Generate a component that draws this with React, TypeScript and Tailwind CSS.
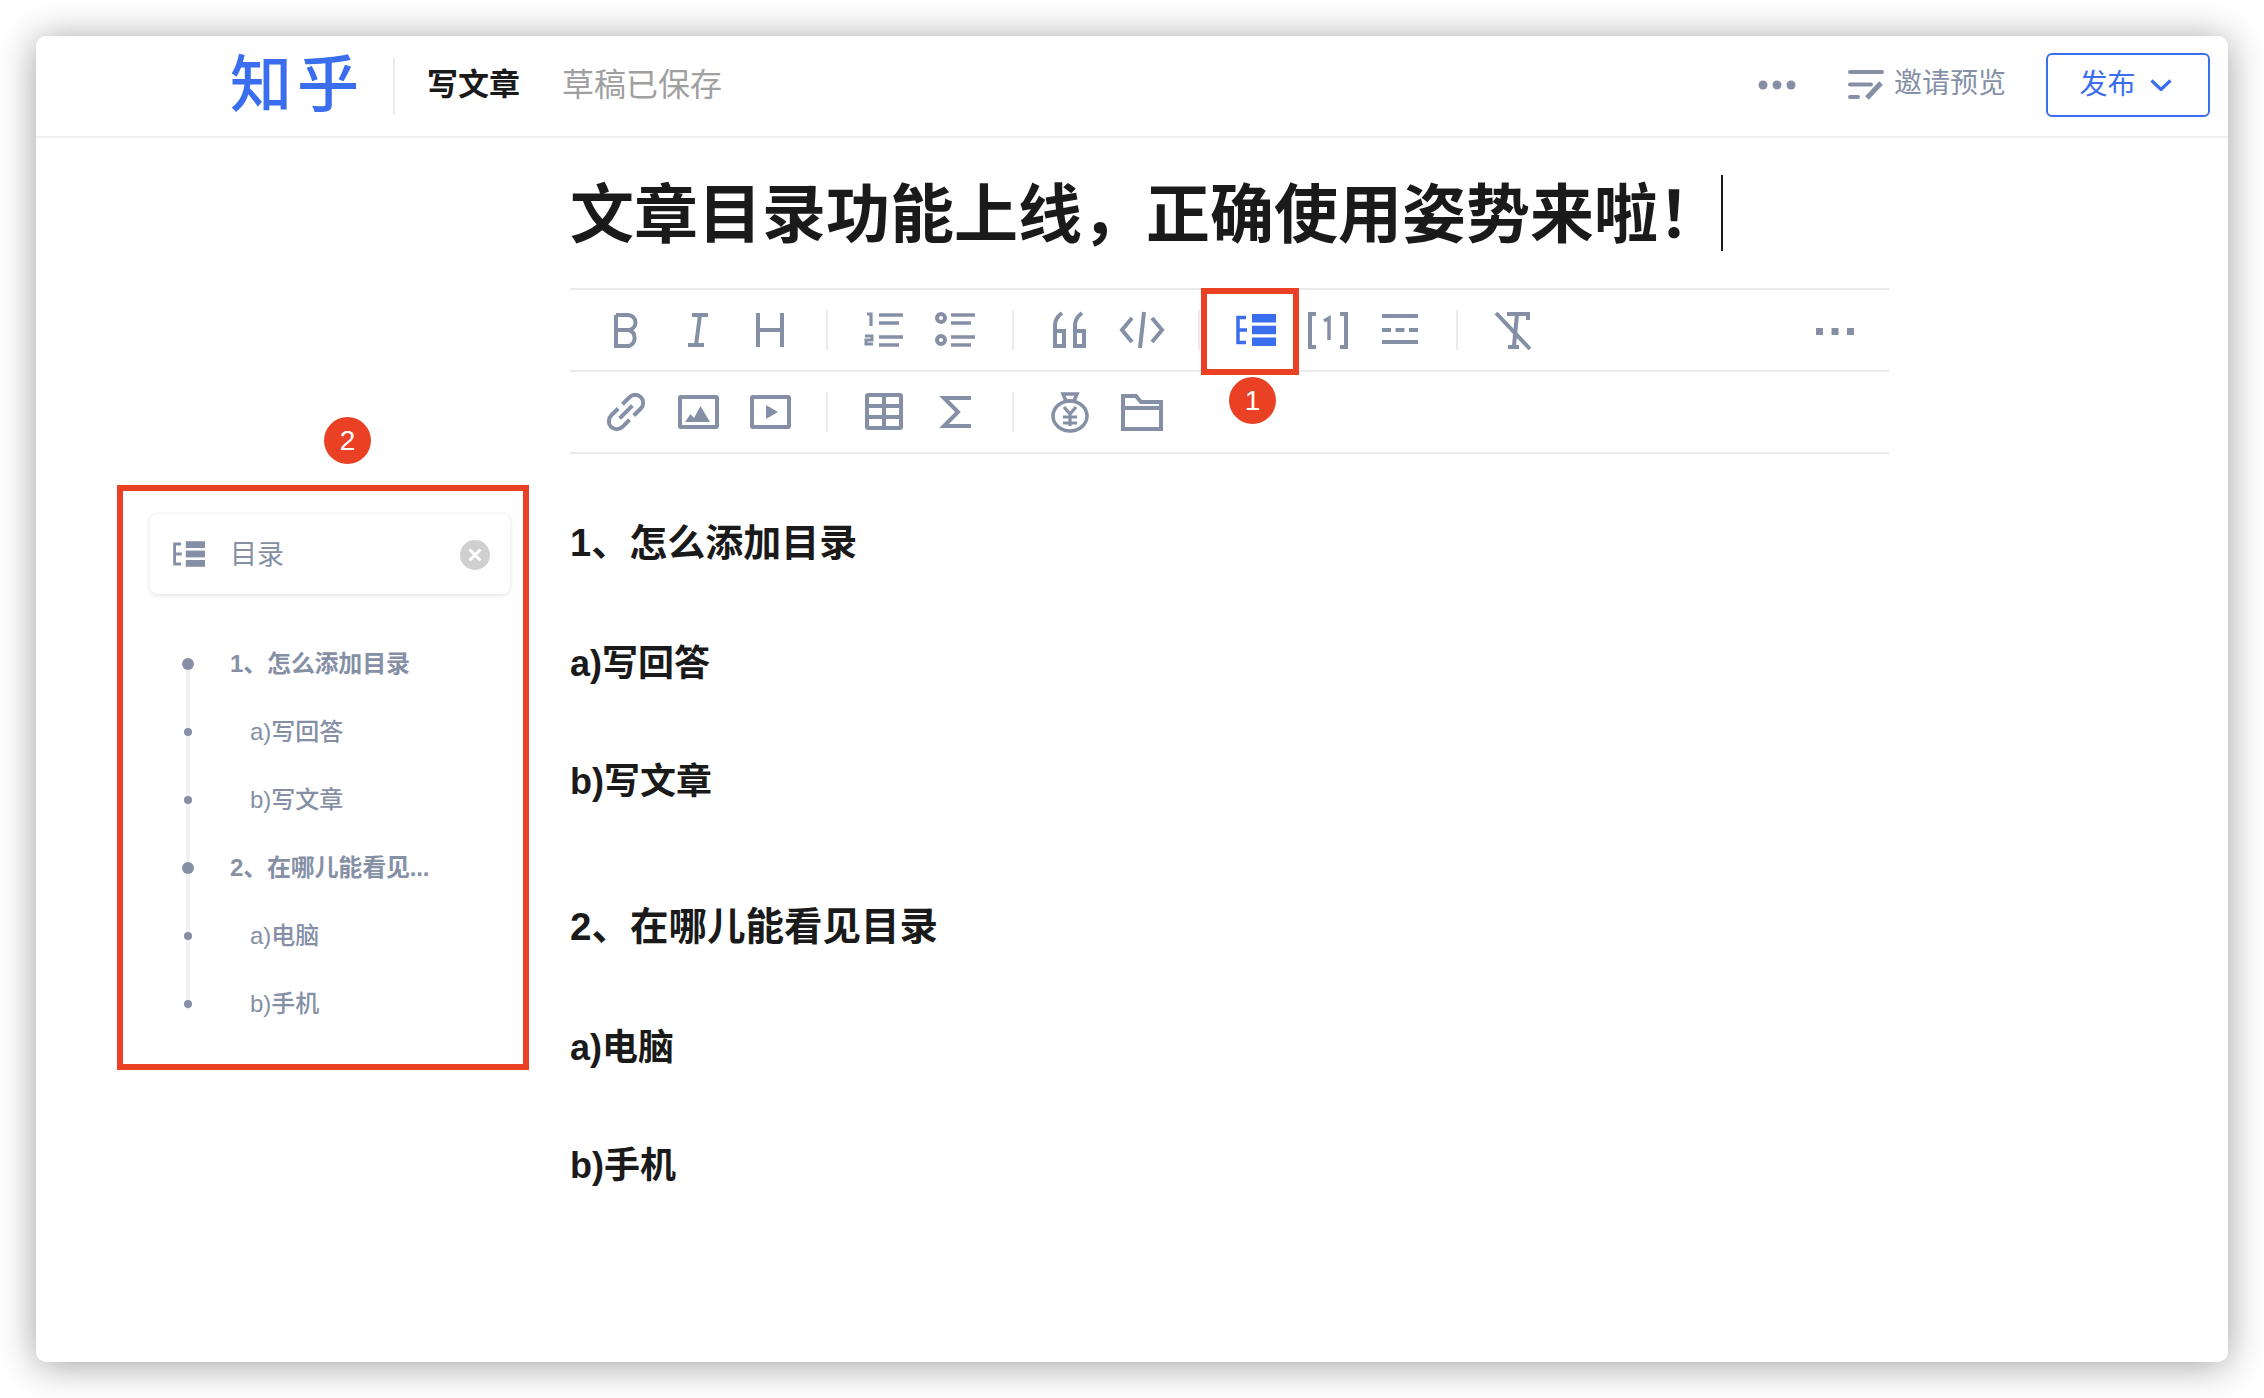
import React from "react";

const Ico = ({ children, vb = "0 0 48 48" }: { children: React.ReactNode; vb?: string }) => (
  <div className="w-[72px] h-[48px] flex items-center justify-center shrink-0 text-[#8590a6]">
    <svg width="48" height="48" viewBox={vb} fill="none" stroke="currentColor" strokeWidth="4">
      {children}
    </svg>
  </div>
);

const Sep = () => <div className="w-[2px] h-[40px] mx-[20px] bg-[#ebebeb] shrink-0" />;

const TocIcon = ({ className }: { className: string }) => (
  <svg className={className} viewBox="0 0 40 32" fill="currentColor">
    <rect x="16" y="0" width="24" height="8.500" />
    <rect x="16" y="11.750" width="24" height="8.500" />
    <rect x="16" y="23.500" width="24" height="8.500" />
    <path d="M10 3.500H2v25h8M2 16h9" fill="none" stroke="currentColor" strokeWidth="3.500" />
  </svg>
);

const toc = [
  { t: "1、怎么添加目录", top: true },
  { t: "a)写回答", top: false },
  { t: "b)写文章", top: false },
  { t: "2、在哪儿能看见...", top: true },
  { t: "a)电脑", top: false },
  { t: "b)手机", top: false },
];

const body = [
  { t: "1、怎么添加目录", c: "mt-[64px] text-[38px]" },
  { t: "a)写回答", c: "mt-[71px] text-[36px]" },
  { t: "b)写文章", c: "mt-[68px] text-[36px]" },
  { t: "2、在哪儿能看见目录", c: "mt-[95px] text-[38.500px]" },
  { t: "a)电脑", c: "mt-[71px] text-[36px]" },
  { t: "b)手机", c: "mt-[68px] text-[36px]" },
];

export default function App() {
  return (
    <div className="w-[2264px] h-[1398px] bg-white p-[36px] font-['Liberation_Sans','Noto_Sans_CJK_SC',sans-serif] overflow-hidden">
      <div className="w-[2192px] h-[1326px] bg-white rounded-[10px] shadow-[0_3px_38px_rgba(0,0,0,0.38)] flex flex-col overflow-hidden">
        {/* header */}
        <header className="h-[100px] shrink-0 flex items-center pl-[194px] pr-[18px] shadow-[0_1px_3px_rgba(26,26,26,0.12)]">
          <span className="w-[128px] text-[62px] leading-[60px] tracking-[5px] font-medium text-[#3a6eee] whitespace-nowrap">知乎</span>
          <div className="w-[2px] h-[57px] bg-[#ebebeb] ml-[35px]" />
          <span className="ml-[32px] text-[31px] font-bold text-[#1a1a1a] mb-[2px]">写文章</span>
          <span className="ml-[42px] text-[32px] text-[#a0a0a0] mb-[2px]">草稿已保存</span>
          <svg className="ml-auto text-[#8590a6] mb-[2px]" width="38" height="12" viewBox="0 0 38 12" fill="currentColor">
            <circle cx="5" cy="6" r="4.500" />
            <circle cx="19" cy="6" r="4.500" />
            <circle cx="33" cy="6" r="4.500" />
          </svg>
          <svg className="ml-[52px] text-[#8590a6] mb-[3px]" width="36" height="30" viewBox="0 0 36 30" fill="none" stroke="currentColor" strokeLinecap="round" strokeWidth="4">
            <path d="M2 2h32M2 14.500h21M2 27h8" />
            <path d="M19 28l14-15" strokeWidth="5" strokeLinecap="butt" />
          </svg>
          <span className="ml-[10px] text-[28px] text-[#8590a6] whitespace-nowrap mb-[4px]">邀请预览</span>
          <button className="ml-[40px] w-[164px] h-[64px] border-2 border-[#3a6eee] rounded-[6px] flex items-center justify-center text-[#3a6eee] text-[28px] mb-[2px] pr-[5px]">
            <span>发布</span>
            <svg className="ml-[14px]" width="22" height="12" viewBox="0 0 22 12" fill="none" stroke="currentColor" strokeWidth="3.200">
              <path d="M1.500 1.500L11 10.500 20.500 1.500" />
            </svg>
          </button>
        </header>

        <div className="flex flex-1">
          {/* sidebar */}
          <aside className="w-[534px] shrink-0 pl-[81px] pt-[349px]">
            <div className="relative w-[412px] h-[585px] border-[6px] border-[#ea4125] pl-[27px] pr-[13px] pt-[23px]">
              <div className="absolute left-[201px] top-[-74px] w-[47px] h-[47px] rounded-full bg-[#ea4125] text-white text-[28px] font-medium flex items-center justify-center">2</div>
              <div className="w-[360px] h-[80px] rounded-[8px] bg-white shadow-[0_1px_5px_rgba(26,26,26,0.14)] flex items-center pl-[23px] pr-[20px] text-[#8590a6]">
                <TocIcon className="w-[32px] h-[26px]" />
                <span className="ml-[25px] text-[27px] mt-[2px]">目录</span>
                <svg className="ml-auto mt-[2px]" width="30" height="30" viewBox="0 0 30 30">
                  <circle cx="15" cy="15" r="15" fill="#d0d0d0" />
                  <path d="M9.500 9.500l11 11M20.500 9.500l-11 11" stroke="#fff" strokeWidth="3" />
                </svg>
              </div>
              <ul className="relative mt-[36px]">
                <div className="absolute left-[36px] top-[34px] w-[4px] h-[346px] bg-[#eef0f4]" />
                {toc.map((it) => (
                  <li key={it.t} className="relative h-[68px] flex items-center text-[24px] text-[#8590a6]">
                    <div className="w-[76px] flex justify-center shrink-0">
                      <div className={it.top ? "w-[12px] h-[12px] rounded-full bg-[#8590a6]" : "w-[8px] h-[8px] rounded-full bg-[#8590a6]"} />
                    </div>
                    <span className={it.top ? "pl-[4px] font-semibold whitespace-nowrap tracking-[-0.2px]" : "pl-[24px] font-medium whitespace-nowrap"}>{it.t}</span>
                  </li>
                ))}
              </ul>
            </div>
          </aside>

          {/* main */}
          <main className="w-[1319px] shrink-0">
            <div className="h-[152px] pt-[39px] flex items-start">
              <h1 className="mt-[2px] text-[64px] leading-[76px] font-bold text-[#1a1a1a] whitespace-nowrap">文章目录功能上线，正确使用姿势来啦！</h1>
              <div className="w-[2px] h-[76px] bg-[#1a1a1a] -ml-[1px]" />
            </div>

            <div className="relative border-t-2 border-[#ebebeb]">
              <div className="absolute left-[631px] top-[-2px] w-[98px] h-[87px] border-[6px] border-[#ea4125] z-10" />
              <div className="absolute left-[659px] top-[87px] w-[47px] h-[47px] rounded-full bg-[#ea4125] text-white text-[28px] font-medium flex items-center justify-center z-10">1</div>

              <div className="h-[82px] border-b-2 border-[#ebebeb] flex items-center pl-[20px] pr-[18px]">
                <Ico><path d="M14 9v31h13a8.500 8.500 0 0 0 0-16H14m0-15h12a7.500 7.500 0 0 1 0 15" /></Ico>
                <Ico><path d="M18 9h16M14 39h16M26 9l-4 30" /></Ico>
                <Ico><path d="M12 7v34M36 7v34M12 24h24" /></Ico>
                <Sep />
                <Ico>
                  <path d="M19 9h24M19 17h20M19 31h24M19 39h20" strokeWidth="3.500" />
                  <path d="M7 8h4v12" strokeWidth="3.200" />
                  <path d="M5 30h7v4H6v4h7" strokeWidth="3" />
                </Ico>
                <Ico>
                  <circle cx="9" cy="12" r="4" strokeWidth="4" />
                  <circle cx="9" cy="34" r="4" strokeWidth="4" />
                  <path d="M19 9h24M19 17h20M19 31h24M19 39h20" strokeWidth="3.500" />
                </Ico>
                <Sep />
                <Ico>
                  <path d="M9 25h9v15H9V19c0-5 3-9 7-12" />
                  <path d="M29 25h9v15h-9V19c0-5 3-9 7-12" />
                </Ico>
                <Ico><path d="M14 12L4 24l10 12M34 12l10 12-10 12M26 6l-4 36" /></Ico>
                <Sep />
                <div className="w-[72px] h-[48px] flex items-center justify-center shrink-0 text-[#3a6eee]">
                  <TocIcon className="w-[40px] h-[32px]" />
                </div>
                <Ico><path d="M12 8H6v33h6M36 8h6v33h-6" /><path d="M20 15l5-3v22" strokeWidth="3.500" /></Ico>
                <Ico><path d="M6 10h36M6 36h36" /><path d="M6 24h9M19.500 24h9M33 24h9" /></Ico>
                <Sep />
                <Ico><path d="M17 8h21v6M27 8l-3 32M18 41h11" /><path d="M6 7l34 36" /></Ico>
                <div className="ml-auto">
                  <Ico>
                    <g fill="currentColor" stroke="none">
                      <rect x="5" y="22" width="7" height="7" />
                      <rect x="20.500" y="22" width="7" height="7" />
                      <rect x="36" y="22" width="7" height="7" />
                    </g>
                  </Ico>
                </div>
              </div>

              <div className="h-[82px] border-b-2 border-[#ebebeb] flex items-center pl-[20px] pr-[18px]">
                <Ico>
                  <g transform="rotate(-45 24 24)">
                    <path d="M21 16H11a8 8 0 0 0 0 16h10M27 32h10a8 8 0 0 0 0-16H27M15 24h18" />
                  </g>
                </Ico>
                <Ico>
                  <rect x="6" y="9" width="37" height="30" rx="1" />
                  <path d="M11 34l5.500-8 3.500 4 6.500-12 9.500 16z" fill="currentColor" stroke="none" />
                </Ico>
                <Ico>
                  <rect x="6" y="9" width="37" height="30" rx="1" />
                  <path d="M20 17l12 7-12 7z" fill="currentColor" stroke="none" />
                </Ico>
                <Sep />
                <Ico>
                  <rect x="7" y="7" width="34" height="33" rx="1" />
                  <path d="M7 18h34M7 29h34M24 7v33" />
                </Ico>
                <Ico><path d="M39 10H12l14 14-14 14h27" /></Ico>
                <Sep />
                <Ico>
                  <path d="M17 6h14l-3 7h-8z" strokeWidth="3.500" />
                  <ellipse cx="24" cy="28" rx="17" ry="15" strokeWidth="3.500" />
                  <path d="M18 19l6 7 6-7M24 26v12M17 29h14M17 35h14" strokeWidth="3.200" />
                </Ico>
                <Ico>
                  <path d="M5 8h13l5 6h20v27H5zM5 20h38" strokeWidth="4" />
                </Ico>
              </div>

              <div className="flex flex-col">
                {body.map((b) => (
                  <p key={b.t} className={`${b.c} leading-[50px] font-bold text-[#1a1a1a]`}>{b.t}</p>
                ))}
              </div>
            </div>
          </main>
        </div>
      </div>
    </div>
  );
}
